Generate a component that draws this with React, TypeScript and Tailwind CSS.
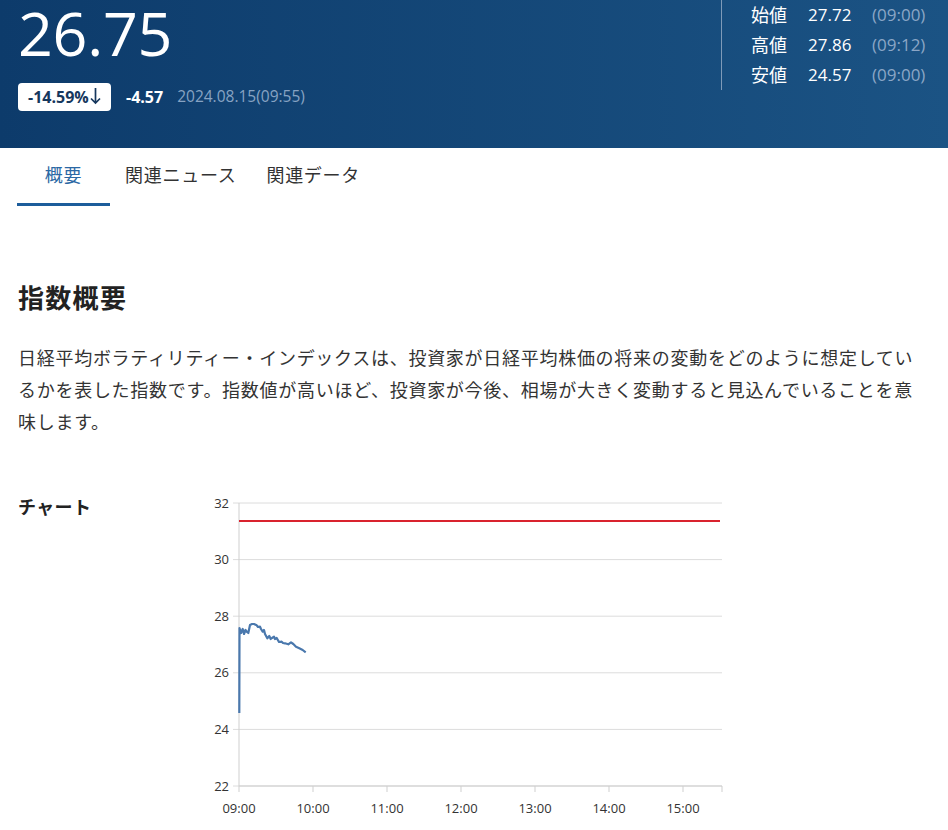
import React from 'react';

const JP = { fontFamily: '"Open Sans", "Noto Sans CJK JP", sans-serif' };

const ohlc = [
  { label: '始値', value: '27.72', time: '(09:00)' },
  { label: '高値', value: '27.86', time: '(09:12)' },
  { label: '安値', value: '24.57', time: '(09:00)' },
];

const tabs = ['概要', '関連ニュース', '関連データ'];

// chart geometry, in svg coords (svg sits at x=200, y=490 of the page)
const X0 = 39;
const PX_PER_MIN = 74 / 60;
const Y_TOP = 13;
const PX_PER_PT = 28.3;
const yOf = (v: number) => Y_TOP + (32 - v) * PX_PER_PT;
const xOf = (min: number) => X0 + min * PX_PER_MIN;

const trace: [number, number][] = [
  [239.3, 713], [239.5, 628], [241, 633], [242.7, 629], [244, 634], [245.5, 630],
  [247, 632], [248.3, 633], [250, 625], [252, 624], [254, 624], [256.7, 625.3],
  [258, 627], [260, 626.7], [261, 629], [262.7, 631.7], [264, 630], [265, 634],
  [267.3, 638.3], [269.3, 636], [270.7, 639], [272, 638], [274, 636.7], [275, 639],
  [276.7, 638], [279, 642], [281.7, 641.7], [283, 643], [285, 643.3], [288.3, 644.3],
  [291, 642.3], [293.3, 644], [296, 646.7], [299.3, 648.3], [302.7, 650], [305.7, 652.3],
];

function Chart() {
  const yTicks = [32, 30, 28, 26, 24, 22];
  const xTicks = ['09:00', '10:00', '11:00', '12:00', '13:00', '14:00', '15:00'];
  const xEnd = xOf(390);
  return (
    <svg width={540} height={340} className="block" style={{ fontFamily: '"Open Sans", sans-serif' }}>
      {yTicks.map((v) => (
        <g key={v}>
          <line x1={X0 - 6} x2={xEnd + 2} y1={yOf(v)} y2={yOf(v)} stroke="#dcdcdc" strokeWidth={1} />
          <text x={29} y={yOf(v) + 4.5} fontSize={13} fill="#333" textAnchor="end">{v}</text>
        </g>
      ))}
      <line x1={X0} x2={X0} y1={yOf(32)} y2={yOf(22)} stroke="#cfcfcf" strokeWidth={1} />
      <line x1={X0} x2={xEnd + 2} y1={yOf(22)} y2={yOf(22)} stroke="#cfcfcf" strokeWidth={1} />
      {xTicks.map((t, i) => (
        <g key={t}>
          <line x1={xOf(i * 60)} x2={xOf(i * 60)} y1={yOf(22)} y2={yOf(22) + 6} stroke="#cfcfcf" strokeWidth={1} />
          <text x={xOf(i * 60)} y={yOf(22) + 27} fontSize={13} fill="#333" textAnchor="middle">{t}</text>
        </g>
      ))}
      <line x1={xEnd + 2} x2={xEnd + 2} y1={yOf(22)} y2={yOf(22) + 6} stroke="#cfcfcf" strokeWidth={1} />
      <line x1={X0} x2={xEnd} y1={31} y2={31} stroke="#d9232e" strokeWidth={2} />
      <polyline
        points={trace.map(([x, y]) => `${x - 200},${y - 490}`).join(' ')}
        fill="none"
        stroke="#4a78ad"
        strokeWidth={2.2}
        strokeLinejoin="round"
      />
    </svg>
  );
}

export default function App() {
  return (
    <div className="w-[948px] h-[830px] overflow-hidden bg-white text-[#333]" style={JP}>
      {/* quote header */}
      <div className="h-[148px] flex justify-between bg-gradient-to-r from-[#0d3b6b] to-[#1b5384]">
        <div className="pl-[18px] pt-[2px]">
          <div className="text-[61px] leading-[62px] text-white tracking-[-0.3px]">26.75</div>
          <div className="mt-[19px] flex items-center h-[28px]">
            <div className="h-[28px] w-[93px] bg-white rounded-[4px] flex items-center pl-[10px] text-[#16375d] font-bold text-[16px]">
              <span>-14.59%</span>
              <svg width="11" height="18" viewBox="0 0 11 18" className="ml-[1px] mb-[2px]">
                <path d="M5.5 1 V16 M1 11.5 L5.5 16 L10 11.5" fill="none" stroke="#16375d" strokeWidth="1.7" />
              </svg>
            </div>
            <span className="ml-[15px] text-white font-bold text-[16px]">-4.57</span>
            <span className="ml-[14px] text-[15.5px] text-[#87a3c3]">2024.08.15(09:55)</span>
          </div>
        </div>
        <div className="w-[227px] h-[90px] border-l border-[#7f9ab8] pl-[29px]">
          {ohlc.map((r) => (
            <div key={r.label} className="h-[30px] flex items-center text-[17px]">
              <span className="w-[57px] text-white text-[18px]">{r.label}</span>
              <span className="w-[64px] text-white">{r.value}</span>
              <span className="text-[#8ba6c6]">{r.time}</span>
            </div>
          ))}
        </div>
      </div>

      {/* tabs */}
      <div className="h-[58px] px-[17px] flex">
        {tabs.map((t, i) => (
          <div
            key={t}
            className={
              i === 0
                ? 'min-w-[93px] px-[15px] flex items-center justify-center text-[18px] tracking-[0.04em] text-[#2b68a4] border-b-[3px] border-[#1d5d9b]'
                : 'min-w-[93px] px-[15px] flex items-center justify-center text-[18px] tracking-[0.04em] text-[#333] border-b-[3px] border-transparent'
            }
          >
            {t}
          </div>
        ))}
      </div>

      {/* body */}
      <div className="px-[18px]">
        <h2 className="mt-[74px] text-[26px] leading-[36px] font-bold tracking-[0.05em] text-[#222]">指数概要</h2>
        <p className="mt-[26px] text-[18px] leading-[32px] tracking-[0.04em] text-[#333]">
          日経平均ボラティリティー・インデックスは、投資家が日経平均株価の将来の変動をどのように想定しているかを表した指数です。指数値が高いほど、投資家が今後、相場が大きく変動すると見込んでいることを意味します。
        </p>
        <div className="mt-[52px] flex">
          <div className="w-[182px] pt-[5px] text-[18px] leading-[24px] font-bold tracking-[0.02em] text-[#222]">チャート</div>
          <Chart />
        </div>
      </div>
    </div>
  );
}
